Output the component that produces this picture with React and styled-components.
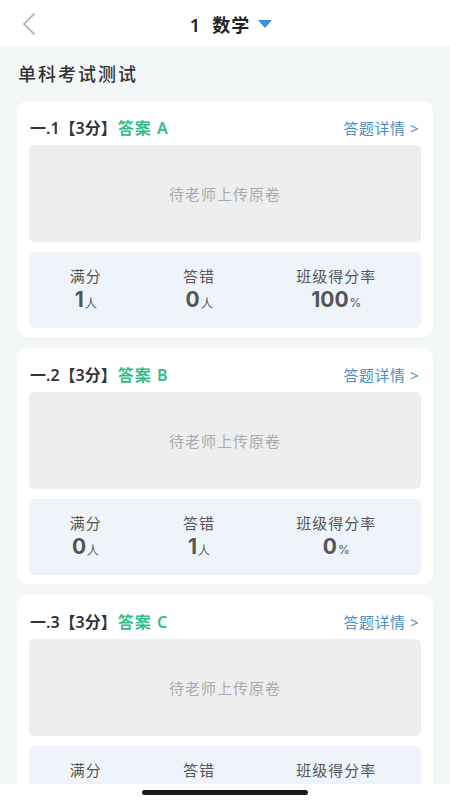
import styled, { createGlobalStyle } from "styled-components";

const GlobalStyle = createGlobalStyle`
  html, body {
    margin: 0;
    padding: 0;
    height: 100%;
    overflow: hidden;
    background: #f3f7f8;
    font-family: "Noto Sans", "Noto Sans CJK SC", sans-serif;
  }
  * { box-sizing: border-box; }
`;

const Page = styled.div`
  width: 450px;
  height: 800px;
  display: flex;
  flex-direction: column;
  background: #f3f7f8;
  position: relative;
  overflow: hidden;
`;

const Header = styled.header`
  height: 47px;
  flex-shrink: 0;
  background: #fff;
  display: flex;
  align-items: center;
  justify-content: center;
  position: relative;
`;

const BackButton = styled.button`
  position: absolute;
  left: 16px;
  top: 10px;
  width: 26px;
  height: 28px;
  border: none;
  background: none;
  padding: 0;
  display: flex;
  align-items: center;
  justify-content: center;
`;

const Title = styled.div`
  display: flex;
  align-items: center;
  gap: 8px;
  font-size: 18px;
  font-weight: 600;
  color: #222;
  letter-spacing: 1px;
  margin-left: 12px;
`;

const Content = styled.main`
  padding: 0 17px;
  display: flex;
  flex-direction: column;
  gap: 11px;
`;

const SectionTitle = styled.h2`
  margin: 0;
  padding: 15px 1px 4px;
  font-size: 18px;
  font-weight: 500;
  color: #333;
  letter-spacing: 2px;
  line-height: 24px;
`;

const Card = styled.section`
  background: #fff;
  border-radius: 11px;
  padding: 16px 12px 9px;
  display: flex;
  flex-direction: column;
  flex-shrink: 0;
`;

const CardHead = styled.div`
  display: flex;
  justify-content: space-between;
  align-items: center;
  height: 20px;
  margin-bottom: 8px;
  padding: 0 2px 0 1px;
`;

const QTitle = styled.div`
  font-size: 16px;
  font-weight: 600;
  color: #333;
  display: flex;
  align-items: center;
`;

const Answer = styled.span`
  color: #2fbe86;
  margin-left: 1px;
  letter-spacing: 1px;
`;

const DetailLink = styled.a`
  font-size: 15px;
  color: #4a8dc2;
  letter-spacing: 0.5px;
  text-decoration: none;
`;

const Paper = styled.div`
  height: 97px;
  border-radius: 5px;
  background: #eeeeee;
  display: flex;
  align-items: center;
  justify-content: center;
  font-size: 15px;
  color: #aaa;
  letter-spacing: 1px;
`;

const Stats = styled.div`
  margin-top: 10px;
  height: 76px;
  border-radius: 5px;
  background: #eff4fa;
  display: flex;
  justify-content: space-around;
  align-items: center;
  padding-right: 4px;
`;

const Stat = styled.div`
  display: flex;
  flex-direction: column;
  align-items: center;
  gap: 3px;
  margin-top: 2px;
`;

const StatLabel = styled.div`
  font-size: 15px;
  color: #555;
  letter-spacing: 1px;
  line-height: 18px;
`;

const StatValue = styled.div`
  font-family: "Inter", "Noto Sans", sans-serif;
  font-size: 21px;
  font-weight: 700;
  color: #555;
  line-height: 24px;
`;

const Unit = styled.span`
  font-size: 12px;
  font-weight: 400;
  margin-left: 1px;
`;

const HomeBar = styled.div`
  position: absolute;
  left: 0;
  right: 0;
  bottom: 0;
  height: 16px;
  background: #fff;
  display: flex;
  justify-content: center;
  padding-top: 6px;

  &::after {
    content: "";
    width: 166px;
    height: 5px;
    border-radius: 3px;
    background: #1a1a1a;
  }
`;

const questions = [
  { no: 1, answer: "A", full: 1, wrong: 0, rate: 100 },
  { no: 2, answer: "B", full: 0, wrong: 1, rate: 0 },
  { no: 3, answer: "C", full: 0, wrong: 1, rate: 0 },
];

function QuestionCard({ q }) {
  return (
    <Card>
      <CardHead>
        <QTitle>
          一.{q.no}【3分】<Answer>答案 {q.answer}</Answer>
        </QTitle>
        <DetailLink>答题详情 &gt;</DetailLink>
      </CardHead>
      <Paper>待老师上传原卷</Paper>
      <Stats>
        <Stat>
          <StatLabel>满分</StatLabel>
          <StatValue>
            {q.full}
            <Unit>人</Unit>
          </StatValue>
        </Stat>
        <Stat>
          <StatLabel>答错</StatLabel>
          <StatValue>
            {q.wrong}
            <Unit>人</Unit>
          </StatValue>
        </Stat>
        <Stat>
          <StatLabel>班级得分率</StatLabel>
          <StatValue>
            {q.rate}
            <Unit>%</Unit>
          </StatValue>
        </Stat>
      </Stats>
    </Card>
  );
}

export default function App() {
  return (
    <>
      <GlobalStyle />
      <Page>
        <Header>
          <BackButton>
            <svg width="16" height="24" viewBox="0 0 16 24">
              <path
                d="M13 2 L3 12 L13 22"
                fill="none"
                stroke="#bbb"
                strokeWidth="2"
                strokeLinecap="round"
                strokeLinejoin="round"
              />
            </svg>
          </BackButton>
          <Title>
            <span>1&nbsp;&nbsp;数学</span>
            <svg width="14" height="8" viewBox="0 0 14 8">
              <path d="M0 0 H14 L7 8 Z" fill="#3a8ee6" />
            </svg>
          </Title>
        </Header>
        <Content>
          <SectionTitle>单科考试测试</SectionTitle>
          {questions.map((q) => (
            <QuestionCard key={q.no} q={q} />
          ))}
        </Content>
        <HomeBar />
      </Page>
    </>
  );
}
